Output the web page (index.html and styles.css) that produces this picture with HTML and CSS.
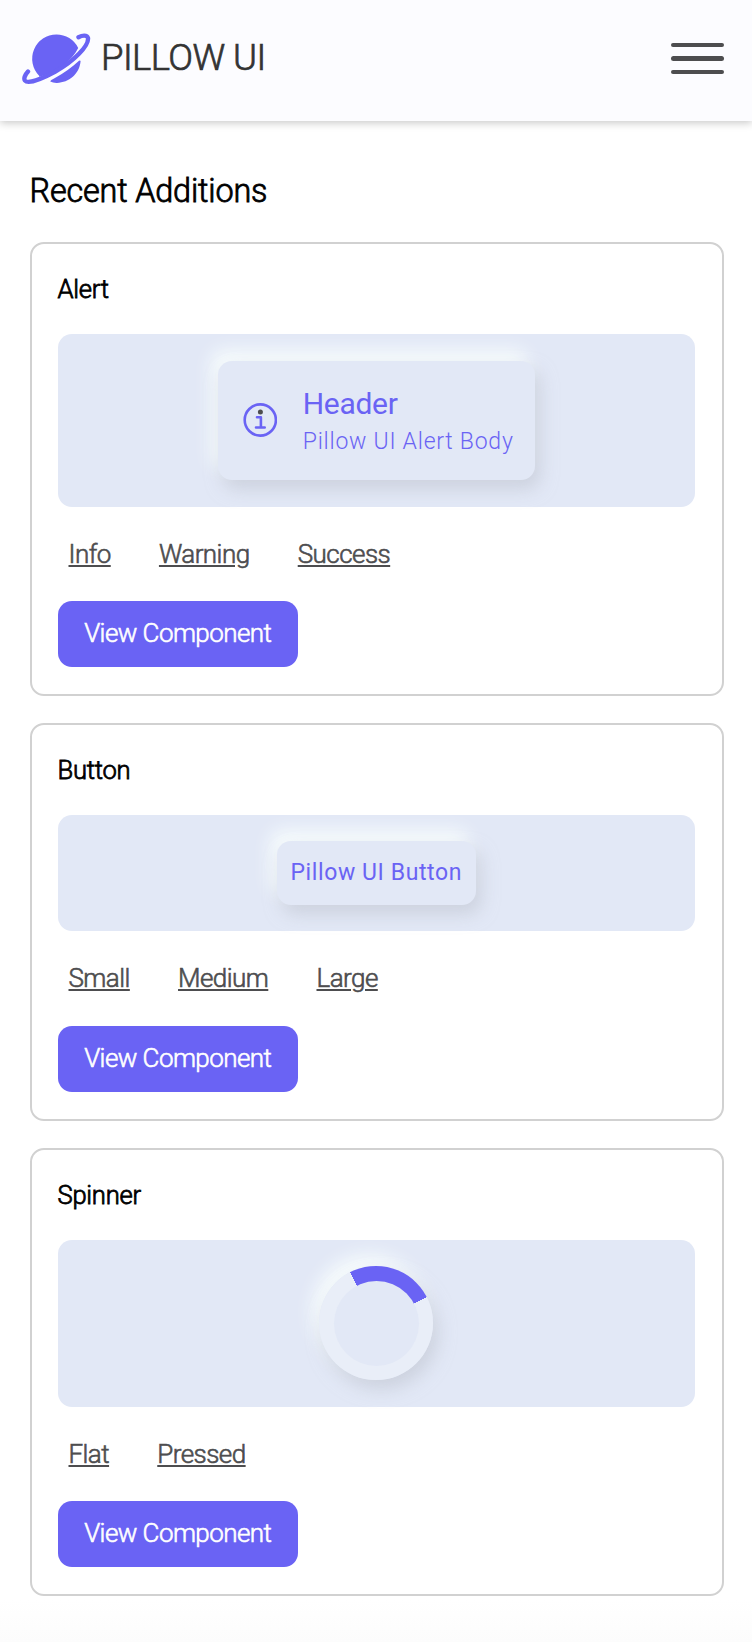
FILE: index.html
```html
<!DOCTYPE html>
<html lang="en">
<head>
<meta charset="utf-8">
<title>Pillow UI</title>
<link rel="stylesheet" href="styles.css">
</head>
<body>
<header class="topbar">
  <a class="brand">
    <svg class="planet" viewBox="0 0 70 54" width="70" height="54">
      <path class="fill" d="M17.3 43.9A24.3 24.3 0 0 1 34.5 2.4A24.3 24.3 0 0 1 56.2 16C50 29 35 40 17.3 45Z"/>
      <path class="fill" d="M58.6 29.3C57.5 42 47 50.6 35 50.9Q31 51 28.3 49.6C28 48.6 30 47.6 32.5 46.2C42 41 50 35.5 57 28.8Q58.4 28 58.6 29.3Z"/>
      <path class="ring" d="M56.5 5.2C60 3.4 65 2.5 66 6C67 13.5 52 29.5 33 39.7C19 47.3 6 52 3 48.6C1.3 46.5 3.3 42.4 6 39.5"/>
    </svg>
    <span class="brand-name">PILLOW UI</span>
  </a>
  <div class="menu"><i></i><i></i><i></i></div>
</header>
<main class="content">
  <h1 class="heading">Recent Additions</h1>
  <section class="card">
    <h2 class="card-title">Alert</h2>
    <div class="preview">
      <div class="alert raised">
        <svg class="info" viewBox="0 0 34 34" width="34" height="34">
          <circle class="info-ring" cx="17.3" cy="17" r="15.6"/>
          <path class="info-stem" d="M14 14.2H17.9V24.5M13 24.5H21.7"/>
          <circle class="info-dot" cx="17.4" cy="8.9" r="2.5"/>
        </svg>
        <div class="alert-text">
          <div class="alert-header">Header</div>
          <div class="alert-body">Pillow UI Alert Body</div>
        </div>
      </div>
    </div>
    <nav class="links"><a>Info</a><a>Warning</a><a>Success</a></nav>
    <a class="view">View Component</a>
  </section>
  <section class="card">
    <h2 class="card-title">Button</h2>
    <div class="preview">
      <div class="pillow-button raised">Pillow UI Button</div>
    </div>
    <nav class="links"><a>Small</a><a>Medium</a><a>Large</a></nav>
    <a class="view">View Component</a>
  </section>
  <section class="card">
    <h2 class="card-title">Spinner</h2>
    <div class="preview">
      <div class="spinner raised"></div>
    </div>
    <nav class="links"><a>Flat</a><a>Pressed</a></nav>
    <a class="view">View Component</a>
  </section>
</main>
</body>
</html>
```
FILE: styles.css
```css
* { box-sizing: border-box; }
body {
  margin: 0;
  min-height: 1642px;
  background: linear-gradient(#fff 1600px, #fcfcfc 1642px);
  font-family: Roboto, "Liberation Sans", sans-serif;
  color: #000;
}
.topbar {
  height: 121px;
  padding: 0 28px 4px 22px;
  display: flex;
  align-items: center;
  justify-content: space-between;
  background: #fcfcff;
  box-shadow: 0 2px 8px rgba(0, 0, 0, .22);
}
.brand { display: flex; align-items: center; gap: 9px; }
.planet { display: block; }
.fill { fill: #6a63f4; }
.ring { fill: none; stroke: #6a63f4; stroke-width: 4.4; stroke-linecap: round; }
.brand-name { font-size: 36.5px; line-height: 48px; color: #333; letter-spacing: -.55px; font-weight: 300; -webkit-text-stroke: .7px #333; margin-top: -1px; }
.menu { width: 53px; display: flex; flex-direction: column; gap: 9px; }
.menu i { height: 4.4px; border-radius: 3px; background: #4d4d4f; }
.content { padding: 50px 28.5px 0 29.5px; }
.heading { margin: 0 0 31px; padding-top: 1px; font-size: 32.4px; line-height: 39px; font-weight: 300; letter-spacing: -.17px; -webkit-text-stroke: .8px; }
.card {
  border: 2px solid #d1d1d1;
  border-radius: 14px;
  padding: 26px 26.5px 26.8px 26px;
  margin-bottom: 27px;
}
.card-title { margin: 0 0 28.2px; padding-top: 2px; font-size: 25.6px; line-height: 34px; font-weight: 300; letter-spacing: -.25px; -webkit-text-stroke: .8px; }
.preview {
  display: flex;
  justify-content: center;
  padding: 26.5px 0;
  border-radius: 14px;
  background: #e2e8f6;
}
.raised {
  background: #e2e8f6;
  border-radius: 14px;
  color: #6a63f4;
  box-shadow: 5px 9px 17px rgba(190, 195, 207, .6), -7px -11px 17px #f7fcfd;
}
.alert { width: 317px; height: 119.5px; padding-left: 25px; display: flex; align-items: center; gap: 26px; }
.info-ring { fill: none; stroke: #6a63f4; stroke-width: 2.6; }
.info-stem { fill: none; stroke: #6a63f4; stroke-width: 2.6; stroke-linecap: round; stroke-linejoin: round; }
.info-dot { fill: #4d4d4f; }
.alert-text { padding-top: 5px; }
.alert-header { font-size: 30px; line-height: 39px; letter-spacing: -.3px; }
.alert-body { font-size: 23px; line-height: 38px; font-weight: 300; letter-spacing: .75px; white-space: nowrap; }
.pillow-button { width: 199px; height: 63.5px; font-size: 23px; line-height: 64px; text-align: center; letter-spacing: .6px; white-space: nowrap; }
.spinner {
  position: relative;
  width: 114px;
  height: 114px;
  border-radius: 50%;
  background: conic-gradient(from -27deg, #6a63f4 90deg, #e9eef8 90deg);
}
.spinner::after {
  content: "";
  position: absolute;
  inset: 14.5px;
  border-radius: 50%;
  background: #e2e8f6;
}
.links { display: flex; gap: 48.2px; padding: 29px 11px 0; height: 94.3px; }
.links a { font-size: 26px; line-height: 36px; height: 36px; color: #4d4d4f; text-decoration: underline; letter-spacing: -.55px; font-weight: 300; -webkit-text-stroke: .6px; }
.view {
  display: block;
  width: 240.5px;
  height: 66px;
  border-radius: 14px;
  background: #6a63f4;
  color: #fff;
  font-size: 26px;
  line-height: 65px;
  text-align: center;
  letter-spacing: -.57px;
  font-weight: 300;
  -webkit-text-stroke: .6px;
}
```
